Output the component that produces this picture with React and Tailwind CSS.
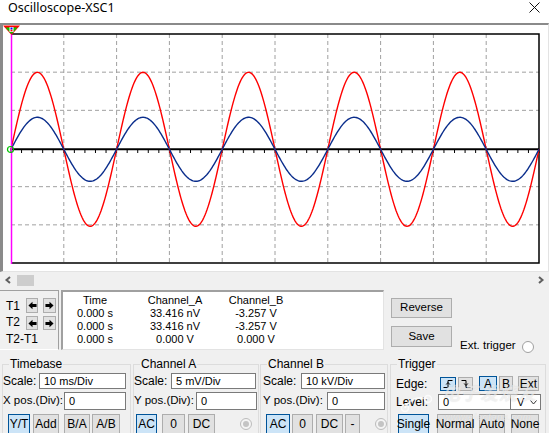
import React from "react";

const sinePath = (amp) => {
  const pts = [];
  for (let i = 0; i <= 528; i += 1) {
    const x = 11 + i;
    const y = 149.3 - amp * Math.sin((2 * Math.PI * i) / 105.6);
    pts.push(`${x.toFixed(1)},${y.toFixed(2)}`);
  }
  return "M" + pts.join(" L");
};

function Screen() {
  const vx = [1, 2, 3, 4, 5, 6, 7, 8, 9].map((k) => 11 + 52.8 * k);
  const hy = [1, 2, 4, 5].map((k) => 34 + 38.17 * k);
  const ticks = [];
  for (let x = 11; x <= 539.5; x += 10.56) ticks.push(x);
  return (
    <div className="h-[249px] border-t-2 border-l-[3px] border-t-[#8a8a8a] border-l-[#8a8a8a] border-r border-b border-r-[#e3e3e3] border-b-[#e3e3e3] bg-white">
      <svg width="545" height="246" viewBox="3 25 545 246" className="block">
        {vx.map((x) => (
          <line key={"v" + x} x1={x} y1="34" x2={x} y2="263" stroke="#a0a0a0" strokeWidth="1" strokeDasharray="4 3" />
        ))}
        {hy.map((y) => (
          <line key={"h" + y} x1="11" y1={y} x2="539" y2={y} stroke="#a0a0a0" strokeWidth="1" strokeDasharray="4 3" />
        ))}
        <path d="M11 34 H539 V263 H11" fill="none" stroke="#000" strokeWidth="1.5" />
        <line x1="11" y1="149.3" x2="539" y2="149.3" stroke="#000" strokeWidth="2" />
        {ticks.map((x) => (
          <line key={"t" + x} x1={x} y1="149" x2={x} y2="153" stroke="#000" strokeWidth="1" />
        ))}
        <path d={sinePath(77)} fill="none" stroke="#ff0000" strokeWidth="1.4" />
        <path d={sinePath(32)} fill="none" stroke="#0a2d8c" strokeWidth="1.4" />
        <line x1="11.5" y1="30" x2="11.5" y2="264" stroke="#ff00ff" strokeWidth="1.5" />
        <circle cx="10.5" cy="149.5" r="3" fill="none" stroke="#00c000" strokeWidth="1.2" />
        <polygon points="3,25.5 20,25.5 11.5,35" fill="#ff0000" />
        <polygon points="5.5,27.5 17.5,27.5 11.5,34" fill="#00cc00" />
        <rect x="9.5" y="27" width="4" height="5" fill="#fff" />
        <rect x="10.5" y="27.5" width="2" height="2" fill="#0000ff" />
        <rect x="10.5" y="29.8" width="2" height="1.6" fill="#ff0000" />
      </svg>
    </div>
  );
}

function ArrowBtn({ dir, className }) {
  return (
    <div className={"flex items-center justify-center bg-[#e1e1e1] border border-[#adadad] " + className}>
      <svg width="9" height="9" viewBox="0 0 10 10">
        {dir === "left" ? (
          <path d="M0.5 5 L5 0.8 L5 3.3 L9.5 3.3 L9.5 6.7 L5 6.7 L5 9.2 Z" fill="#000" />
        ) : (
          <path d="M9.5 5 L5 0.8 L5 3.3 L0.5 3.3 L0.5 6.7 L5 6.7 L5 9.2 Z" fill="#000" />
        )}
      </svg>
    </div>
  );
}

function Btn({ active, className, children }) {
  return (
    <div
      className={
        "flex items-center justify-center whitespace-nowrap border leading-none " +
        (active ? "bg-[#cce4f7] border-[#005499] " : "bg-[#e1e1e1] border-[#adadad] ") +
        className
      }
    >
      {children}
    </div>
  );
}

function Input({ className, children }) {
  return (
    <div className={"flex items-center bg-white border border-[#7a7a7a] pl-[4px] whitespace-nowrap " + className}>
      {children}
    </div>
  );
}

function Radio({ className }) {
  return (
    <div className={"flex items-center justify-center rounded-full border border-[#bcbcbc] bg-[#f4f4f4] w-[12px] h-[12px] " + className}>
      <div className="w-[6px] h-[6px] rounded-full bg-[#c4c4c4]" />
    </div>
  );
}

function Group({ title, className, children }) {
  return (
    <div className={"relative mt-[8px] border border-[#dcdcdc] h-[80px] " + className}>
      <span className="absolute -top-[8px] left-[6px] bg-[#f0f0f0] px-[1px] leading-[14px] text-[12px]">{title}</span>
      {children}
    </div>
  );
}

export default function App() {
  return (
    <div className="w-[549px] h-[433px] overflow-hidden relative bg-[#f0f0f0] text-black text-[11px] font-['Liberation_Sans',Arial,sans-serif]">
      {/* Title bar */}
      <div className="h-[23px] bg-white flex items-start justify-between pl-[8px] pr-[8px]">
        <span className="text-[12.5px] leading-[16px] font-['Noto_Sans',sans-serif]">Oscilloscope-XSC1</span>
        <svg width="11" height="11" viewBox="0 0 11 11" className="mt-[2px] mr-[1px]">
          <path d="M0.5 0.5 L10.5 10.5 M10.5 0.5 L0.5 10.5" stroke="#111" strokeWidth="1" />
        </svg>
      </div>

      <Screen />

      {/* Horizontal scrollbar */}
      <div className="h-[16px] flex items-center">
        <svg width="8" height="8" viewBox="0 0 8 8" className="ml-[4px]">
          <path d="M6 1 L2.5 4 L6 7" fill="none" stroke="#606060" strokeWidth="2" />
        </svg>
        <div className="ml-[5px] w-[17px] h-[11px] bg-[#cdcdcd]" />
        <div className="flex-1" />
        <svg width="8" height="8" viewBox="0 0 8 8" className="mr-[4px]">
          <path d="M2 1 L5.5 4 L2 7" fill="none" stroke="#606060" strokeWidth="2" />
        </svg>
      </div>

      {/* Readout row */}
      <div className="h-[68px] flex pt-[2px]">
        <div className="w-[59px] h-[60px] border-t border-r border-t-[#a0a0a0] border-r-[#a0a0a0] border-b border-b-white flex flex-col pt-[7px]">
          <div className="flex items-center h-[15px]">
            <span className="w-[26px] pl-[6px] text-[12px]">T1</span>
            <ArrowBtn dir="left" className="w-[12px] h-[15px]" />
            <ArrowBtn dir="right" className="ml-[5px] w-[13px] h-[15px]" />
          </div>
          <div className="flex items-center h-[14px] mt-[3px]">
            <span className="w-[26px] pl-[6px] text-[12px] leading-[12px] -mt-[3px]">T2</span>
            <ArrowBtn dir="left" className="w-[12px] h-[14px]" />
            <ArrowBtn dir="right" className="ml-[5px] w-[13px] h-[14px]" />
          </div>
          <div className="mt-[3px] pl-[6px] h-[13px] leading-[13px] text-[12px]">T2-T1</div>
        </div>

        <div className="ml-[2px] w-[323px] h-[60px] bg-white border-t-2 border-l-2 border-t-[#a0a0a0] border-l-[#a0a0a0] border-r border-b border-r-[#e3e3e3] border-b-[#e3e3e3] pt-[2px]">
          <div className="grid grid-cols-[64px_96px_66px] leading-[13px] text-center">
            <span>Time</span>
            <span>Channel_A</span>
            <span>Channel_B</span>
            <span>0.000 s</span>
            <span>33.416 nV</span>
            <span>-3.257 V</span>
            <span>0.000 s</span>
            <span>33.416 nV</span>
            <span>-3.257 V</span>
            <span>0.000 s</span>
            <span>0.000 V</span>
            <span>0.000 V</span>
          </div>
        </div>

        <div className="ml-[7px] flex flex-col pt-[8px]">
          <Btn className="w-[61px] h-[20px] text-[11.5px]">Reverse</Btn>
          <div className="flex items-end mt-[8px]">
            <Btn className="w-[61px] h-[21px] text-[11.5px]">Save</Btn>
            <span className="ml-[8px] leading-[13px] text-[11.5px] -mb-[5px]">Ext. trigger</span>
            <div className="ml-[6px] -mb-[6px] w-[12px] h-[12px] rounded-full border border-[#a0a0a0] bg-white" />
          </div>
        </div>
      </div>

      {/* Controls row */}
      <div className="h-[77px] flex items-start">
        {/* Timebase */}
        <Group title="Timebase" className="ml-[2px] w-[129px]">
          <div className="flex items-center h-[16px] mt-[8px]">
            <span className="w-[36px] text-[12px]">Scale:</span>
            <Input className="w-[87px] h-[16px]">10 ms/Div</Input>
          </div>
          <div className="flex items-center h-[18px] mt-[3px]">
            <span className="w-[61px] text-[11.5px] whitespace-nowrap">X pos.(Div):</span>
            <Input className="w-[62px] h-[18px]">0</Input>
          </div>
          <div className="flex mt-[4px] text-[12px]">
            <Btn active className="ml-[5px] w-[22px] h-[20px]">Y/T</Btn>
            <Btn className="ml-[3px] w-[26px] h-[20px]">Add</Btn>
            <Btn className="ml-[5px] w-[26px] h-[20px]">B/A</Btn>
            <Btn className="ml-[2px] w-[28px] h-[20px]">A/B</Btn>
          </div>
        </Group>

        {/* Channel A */}
        <Group title="Channel A" className="ml-[2px] w-[126px]">
          <div className="flex items-center h-[16px] mt-[8px]">
            <span className="w-[37px] text-[12px]">Scale:</span>
            <Input className="w-[85px] h-[16px]">5 mV/Div</Input>
          </div>
          <div className="flex items-center h-[18px] mt-[3px]">
            <span className="w-[62px] text-[11.5px] whitespace-nowrap">Y pos.(Div):</span>
            <Input className="w-[61px] h-[18px]">0</Input>
          </div>
          <div className="flex items-center mt-[4px] text-[12px]">
            <Btn active className="ml-[2px] w-[21px] h-[20px]">AC</Btn>
            <Btn className="ml-[5px] w-[23px] h-[20px]">0</Btn>
            <Btn className="ml-[3px] w-[27px] h-[20px]">DC</Btn>
            <Radio className="ml-[25px]" />
          </div>
        </Group>

        {/* Channel B */}
        <Group title="Channel B" className="ml-[1px] w-[128px]">
          <div className="flex items-center h-[16px] mt-[8px]">
            <span className="ml-[2px] w-[38px] text-[12px]">Scale:</span>
            <Input className="w-[84px] h-[16px]">10 kV/Div</Input>
          </div>
          <div className="flex items-center h-[18px] mt-[3px]">
            <span className="ml-[2px] w-[64px] text-[11.5px] whitespace-nowrap">Y pos.(Div):</span>
            <Input className="w-[58px] h-[18px]">0</Input>
          </div>
          <div className="flex items-center mt-[4px] text-[12px]">
            <Btn active className="ml-[5px] w-[24px] h-[20px]">AC</Btn>
            <Btn className="ml-[2px] w-[21px] h-[20px]">0</Btn>
            <Btn className="ml-[3px] w-[27px] h-[20px]">DC</Btn>
            <Btn className="ml-[2px] w-[15px] h-[20px]">-</Btn>
            <Radio className="ml-[15px]" />
          </div>
        </Group>

        {/* Trigger */}
        <Group title="Trigger" className="ml-[2px] w-[156px]">
          <div className="flex items-center h-[15px] mt-[11px]">
            <span className="ml-[5px] w-[44px] text-[12px]">Edge:</span>
            <Btn active className="w-[16px] h-[14px]">
              <svg width="10" height="10" viewBox="0 0 10 10">
                <path d="M0.5 8.5 H5 V1.5 H9.5" fill="none" stroke="#000" strokeWidth="1" />
                <path d="M3.2 5.5 L5 3.5 L6.8 5.5" fill="none" stroke="#000" strokeWidth="1" />
              </svg>
            </Btn>
            <Btn className="ml-[2px] w-[15px] h-[14px]">
              <svg width="10" height="10" viewBox="0 0 10 10">
                <path d="M0.5 1.5 H5 V8.5 H9.5" fill="none" stroke="#000" strokeWidth="1" />
                <path d="M3.2 4.5 L5 6.5 L6.8 4.5" fill="none" stroke="#000" strokeWidth="1" />
              </svg>
            </Btn>
            <Btn active className="ml-[6px] w-[18px] h-[15px] text-[12px]">A</Btn>
            <Btn className="ml-[2px] w-[14px] h-[15px] text-[12px]">B</Btn>
            <Btn className="ml-[5px] w-[21px] h-[15px] text-[12px]">Ext</Btn>
          </div>
          <div className="flex items-center h-[16px] mt-[3px]">
            <span className="ml-[5px] w-[42px] text-[12px]">Level:</span>
            <Input className="w-[73px] h-[16px]">0</Input>
            <div className="w-[30px] h-[16px] bg-white border border-[#7a7a7a] border-l-0 flex items-center justify-between pl-[6px] pr-[3px]">
              <span>V</span>
              <svg width="7" height="5" viewBox="0 0 7 5">
                <path d="M0.5 0.5 L3.5 4 L6.5 0.5" fill="none" stroke="#333" strokeWidth="1" />
              </svg>
            </div>
          </div>
          <div className="flex mt-[4px] text-[12px]">
            <Btn active className="ml-[7px] w-[31px] h-[20px]">Single</Btn>
            <Btn className="ml-[8px] w-[36px] h-[20px]">Normal</Btn>
            <Btn className="ml-[6px] w-[26px] h-[20px]">Auto</Btn>
            <Btn className="ml-[6px] w-[28px] h-[20px]">None</Btn>
          </div>
        </Group>
      </div>

      {/* Watermark overlay */}
      <div className="absolute left-[398px] top-[380px] w-[145px] h-[44px] pointer-events-none">
        <svg width="44" height="34" viewBox="0 0 44 34" className="absolute left-0 top-[2px]">
          <path d="M7 26 C10 18 20 14 30 17" fill="none" stroke="rgba(255,255,255,0.7)" strokeWidth="2" />
          <circle cx="7" cy="26" r="3.5" fill="none" stroke="rgba(255,255,255,0.75)" strokeWidth="1.5" />
          <circle cx="30" cy="17" r="3.5" fill="none" stroke="rgba(255,255,255,0.75)" strokeWidth="1.5" />
        </svg>
        <span className="absolute left-[44px] top-0 text-[18px] italic font-bold leading-[24px] tracking-[1px] text-white/60 [text-shadow:0_0_1px_rgba(0,0,0,0.15)] font-['Noto_Sans_CJK_SC',sans-serif]">电子发烧友</span>
        <span className="absolute left-[45px] top-[31px] text-[9.5px] italic leading-[11px] tracking-[0.6px] text-white/60 [text-shadow:0_0_1px_rgba(0,0,0,0.15)]">www.elecfans.com</span>
      </div>
    </div>
  );
}
